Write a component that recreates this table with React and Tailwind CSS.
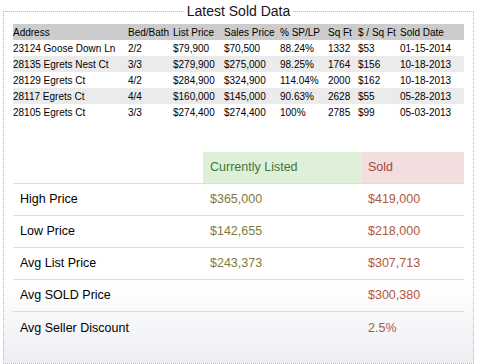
import React from "react";

const rows = [
  ["23124 Goose Down Ln", "2/2", "$79,900", "$70,500", "88.24%", "1332", "$53", "01-15-2014"],
  ["28135 Egrets Nest Ct", "3/3", "$279,900", "$275,000", "98.25%", "1764", "$156", "10-18-2013"],
  ["28129 Egrets Ct", "4/2", "$284,900", "$324,900", "114.04%", "2000", "$162", "10-18-2013"],
  ["28117 Egrets Ct", "4/4", "$160,000", "$145,000", "90.63%", "2628", "$55", "05-28-2013"],
  ["28105 Egrets Ct", "3/3", "$274,400", "$274,400", "100%", "2785", "$99", "05-03-2013"],
];
const head = ["Address", "Bed/Bath", "List Price", "Sales Price", "% SP/LP", "Sq Ft", "$ / Sq Ft", "Sold Date"];

const stats = [
  ["High Price", "$365,000", "$419,000"],
  ["Low Price", "$142,655", "$218,000"],
  ["Avg List Price", "$243,373", "$307,713"],
  ["Avg SOLD Price", "", "$300,380"],
  ["Avg Seller Discount", "", "2.5%"],
];

const cols = "grid grid-cols-[115px_45px_51px_56px_48px_30px_42px_64px]";

export default function App() {
  return (
    <div className="w-[481px] h-[364px] bg-white overflow-hidden" style={{ fontFamily: '"Liberation Sans", Arial, sans-serif' }}>
      <div className="relative ml-[3px] mt-[11px] w-[471px] h-[353px] border border-dotted border-[#b4b4d6] bg-[linear-gradient(to_bottom,#ffffff_78%,#eceef2_100%)] px-[9px] pt-[12px]">
        <div className="absolute left-0 right-0 -top-[9px] flex justify-center">
          <span className="bg-white px-[2px] text-[14px] leading-[16px] text-[#1a1020]">Latest Sold Data</span>
        </div>
        <div className="text-[10px] text-black">
          <div className={`${cols} bg-[#cccccc] h-[16px] items-center`}>
            {head.map((h, i) => (
              <div key={i} className="whitespace-nowrap">{h}</div>
            ))}
          </div>
          {rows.map((r, ri) => (
            <div key={ri} className={`${cols} h-[16px] items-center ${ri % 2 === 1 ? "bg-[#ebebeb]" : ""}`}>
              {r.map((c, i) => (
                <div key={i} className="whitespace-nowrap">{c}</div>
              ))}
            </div>
          ))}
        </div>
        <div className="mt-[32px] text-[12.5px]">
          <div className="grid grid-cols-[190px_159px_102px] h-[32px] border-b border-[#dddddd]">
            <div></div>
            <div className="bg-[#dff0d8] text-[#3c763d] pl-[7px] flex items-center">Currently Listed</div>
            <div className="bg-[#f2dede] text-[#a94442] pl-[6px] flex items-center">Sold</div>
          </div>
          {stats.map((s, i) => (
            <div key={i} className={`grid grid-cols-[190px_159px_102px] h-[32px] items-center ${i < stats.length - 1 ? "border-b border-[#dddddd]" : ""}`}>
              <div className="pl-[7px] text-black">{s[0]}</div>
              <div className="pl-[7px] text-[#7f7a3e]">{s[1]}</div>
              <div className="pl-[6px] text-[#b2563e]">{s[2]}</div>
            </div>
          ))}
        </div>
      </div>
    </div>
  );
}
